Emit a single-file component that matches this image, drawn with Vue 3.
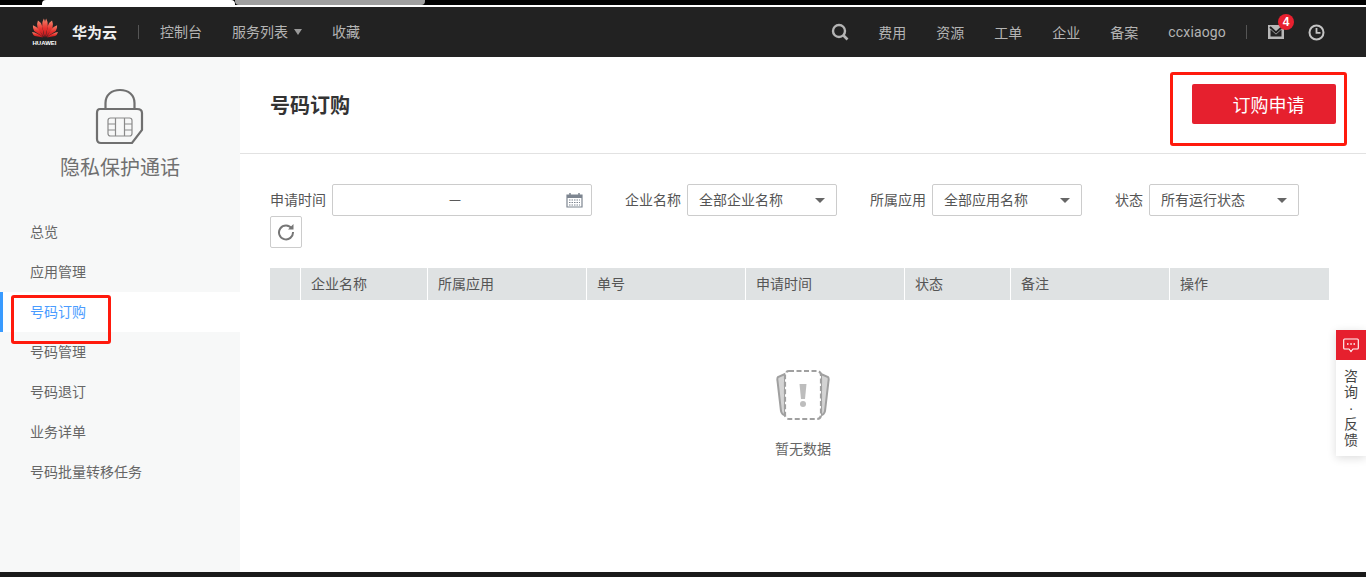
<script setup>
const leftNav = ['控制台', '服务列表', '收藏']
const rightNav = ['费用', '资源', '工单', '企业', '备案']
const sideMenu = ['总览', '应用管理', '号码订购', '号码管理', '号码退订', '业务详单', '号码批量转移任务']
const columns = [
  { label: '', width: 31 },
  { label: '企业名称', width: 127 },
  { label: '所属应用', width: 159 },
  { label: '单号', width: 159 },
  { label: '申请时间', width: 159 },
  { label: '状态', width: 106 },
  { label: '备注', width: 159 },
  { label: '操作', width: 159 }
]
const filters = [
  { label: '企业名称', value: '全部企业名称', cls: 'f1' },
  { label: '所属应用', value: '全部应用名称', cls: 'f2' },
  { label: '状态', value: '所有运行状态', cls: 'f3' }
]
</script>

<template>
  <div class="page">
    <div class="browser-strip">
      <div class="tab-white"></div>
      <div class="tab-grey"></div>
    </div>

    <header class="topbar">
      <div class="logo">
        <svg width="26" height="20" viewBox="0 0 28 23" preserveAspectRatio="none">
          <defs>
            <linearGradient id="petal" x1="0" y1="0" x2="0" y2="1">
              <stop offset="0" stop-color="#f58a70" />
              <stop offset="0.5" stop-color="#e8322e" />
              <stop offset="1" stop-color="#b9141b" />
            </linearGradient>
          </defs>
          <g fill="url(#petal)">
            <path d="M14 22.500 L11 10 Q10.500 4 12.800 0.500 Q15.500 5 14 22.500Z" />
            <path d="M14 22.500 L17 10 Q17.500 4 15.200 0.500 Q12.500 5 14 22.500Z" />
            <path d="M13.200 22 L6 12 Q4.600 7 6.400 3 Q10 5 11 9.500Z" />
            <path d="M14.800 22 L22 12 Q23.400 7 21.600 3 Q18 5 17 9.500Z" />
            <path d="M12.400 22 L2.400 15 Q0.600 12 1 8.400 Q5 10 7.600 13.500Z" />
            <path d="M15.600 22 L25.600 15 Q27.400 12 27 8.400 Q23 10 20.400 13.500Z" />
            <path d="M12 22.500 L3 20.800 Q1 19.500 0 16 Q5.500 16.500 12 22.500Z" />
            <path d="M16 22.500 L25 20.800 Q27 19.500 28 16 Q22.500 16.500 16 22.500Z" />
          </g>
        </svg>
        <span class="logo-text">HUAWEI</span>
      </div>
      <span class="brand">华为云</span>
      <i class="divider"></i>
      <nav class="nav-left">
        <a v-for="item in leftNav" :key="item">
          {{ item }}<em v-if="item === '服务列表'" class="caret"></em>
        </a>
      </nav>
      <div class="nav-right">
        <svg class="search" width="18" height="18" viewBox="0 0 18 18">
          <circle cx="8" cy="8" r="6" fill="none" stroke="#b4b4b4" stroke-width="2.400" />
          <path d="M12.500 12.500 L16.500 16.500" stroke="#b4b4b4" stroke-width="2.600" />
        </svg>
        <a v-for="item in rightNav" :key="item">{{ item }}</a>
        <a class="user">ccxiaogo</a>
        <i class="divider small"></i>
        <span class="mail">
          <svg width="16" height="14" viewBox="0 0 16 14">
            <path d="M0 0 H16 V14 H0Z M2.500 4.500 V11.500 H13.500 V4.500 L8 9.500Z" fill="#b8b8b8" fill-rule="evenodd" />
            <path d="M2 2 L8 7.500 L14 2" fill="none" stroke="#222" stroke-width="2" />
          </svg>
          <b class="badge">4</b>
        </span>
        <svg class="clock" width="17" height="17" viewBox="0 0 17 17">
          <circle cx="8.500" cy="8.500" r="7" fill="none" stroke="#c4c4c4" stroke-width="2" />
          <path d="M8.500 4 V8.800 H12.500" fill="none" stroke="#c4c4c4" stroke-width="1.800" />
        </svg>
      </div>
    </header>

    <div class="body">
      <aside class="sidebar">
        <div class="product">
          <svg width="50" height="58" viewBox="0 0 50 58">
            <path d="M10.500 21 V15 C10.500 7 16.500 2 25 2 C33.500 2 39.500 7 39.500 15 V21" fill="none" stroke="#707070" stroke-width="2.200" />
            <path d="M5 21 H42 Q47 21 47 25 V42 L37 55 H6 Q2 55 2 51 V25 Q2 21 5 21Z" fill="none" stroke="#707070" stroke-width="2.200" />
            <rect x="13" y="30" width="24" height="18" rx="2.500" fill="none" stroke="#8a8a8a" stroke-width="1.200" />
            <path d="M20.500 30 V48 M29.500 30 V48 M13 36 H20.500 M13 42 H20.500 M29.500 36 H37 M29.500 42 H37" stroke="#8a8a8a" stroke-width="1.200" fill="none" />
          </svg>
          <h2>隐私保护通话</h2>
        </div>
        <ul class="menu">
          <li v-for="item in sideMenu" :key="item" :class="{ active: item === '号码订购' }">{{ item }}</li>
        </ul>
      </aside>

      <main class="content">
        <div class="title-row">
          <h1>号码订购</h1>
          <button class="apply">订购申请</button>
        </div>

        <div class="filters">
          <label class="field">
            <span>申请时间</span>
            <div class="box date">
              <span class="dash">—</span>
              <svg width="17" height="16" viewBox="0 0 17 16">
                <path d="M1 3 H16 V15 H1Z" fill="none" stroke="#7d8590" stroke-width="1.200" />
                <path d="M1 3 H16 V6 H1Z" fill="#7d8590" />
                <path d="M4 1 V4 M13 1 V4" stroke="#7d8590" stroke-width="1.500" />
                <path d="M3 8 H14 M3 10.500 H14 M3 13 H14" stroke="#7d8590" stroke-width="1.200" stroke-dasharray="1.500 1" />
              </svg>
            </div>
          </label>
          <label v-for="f in filters" :key="f.label" class="field" :class="f.cls">
            <span>{{ f.label }}</span>
            <div class="box select">
              <span>{{ f.value }}</span>
              <em class="arrow"></em>
            </div>
          </label>
          <button class="refresh">
            <svg width="18" height="18" viewBox="0 0 18 18">
              <path d="M14.800 5.500 A7 7 0 1 0 16 9" fill="none" stroke="#767676" stroke-width="2" />
              <path d="M11 6.500 L16.500 6.500 L16.500 1Z" fill="#767676" />
            </svg>
          </button>
        </div>

        <div class="table-head">
          <div v-for="(col, i) in columns" :key="i" class="th" :style="{ width: col.width + 'px' }">{{ col.label }}</div>
        </div>

        <div class="empty">
          <svg width="54" height="52" viewBox="0 0 54 52">
            <path d="M9 5 L2 8 Q1 9 1.500 12 L5 42 Q6 46 9 46Z" fill="#d4d4d4" stroke="#a0a0a0" stroke-width="2" />
            <path d="M45 5 L52 8 Q53 9 52.500 12 L49 42 Q48 46 45 46Z" fill="#d4d4d4" stroke="#a0a0a0" stroke-width="2" />
            <rect x="9" y="2" width="36" height="48" rx="4" fill="#fff" stroke="#a0a0a0" stroke-width="2.200" stroke-dasharray="5 2.500" />
            <path d="M23.500 15 H30.500 L29 30 H25Z" fill="#bdbdbd" />
            <circle cx="27" cy="35" r="3" fill="#bdbdbd" />
          </svg>
          <p>暂无数据</p>
        </div>
      </main>
    </div>

    <div class="bottom-strip"></div>

    <!-- 截图上的红色标注框 -->
    <div class="mark mark-menu"></div>
    <div class="mark mark-btn"></div>

    <div class="feedback">
      <div class="fb-icon">
        <svg width="16" height="15" viewBox="0 0 16 15">
          <path d="M1.500 1 H14.500 Q15.300 1 15.300 2 V10 Q15.300 11 14.500 11 H10 L8 13.500 L6 11 H1.500 Q0.700 11 0.700 10 V2 Q0.700 1 1.500 1Z" fill="none" stroke="#fff" stroke-width="1.100" />
          <path d="M4 6 H5.500 M7.300 6 H8.800 M10.500 6 H12" stroke="#fff" stroke-width="1.500" />
        </svg>
      </div>
      <div class="fb-text">咨询·反馈</div>
    </div>
  </div>
</template>

<style>
html, body {
  margin: 0;
  background: #fff;
  overflow: hidden;
}
</style>

<style scoped>
* {
  box-sizing: border-box;
}
.page {
  position: relative;
  width: 1366px;
  height: 577px;
  overflow: hidden;
  display: flex;
  flex-direction: column;
  font-family: "Liberation Sans", "Noto Sans CJK SC", sans-serif;
  font-size: 14px;
  color: #666;
}
.browser-strip {
  height: 7px;
  background: #000;
  border-bottom: 2px solid #fff;
  display: flex;
  padding-left: 42px;
  flex: none;
}
.tab-white {
  width: 193px;
  background: #fff;
  border-radius: 4px 4px 0 0;
}
.tab-grey {
  width: 190px;
  background: #a0a0a0;
  border-radius: 0 0 4px 4px;
}
.topbar {
  height: 50px;
  flex: none;
  background: #222;
  display: flex;
  align-items: center;
  padding-left: 31px;
  color: #b4b4b4;
}
.logo {
  width: 27px;
  display: flex;
  flex-direction: column;
  align-items: center;
}
.logo-text {
  font-size: 6px;
  font-weight: 700;
  line-height: 6px;
  color: #fff;
  margin-top: 2px;
  white-space: nowrap;
}
.brand {
  color: #f0f0f0;
  font-size: 15px;
  font-weight: 700;
  margin-left: 14px;
  padding-bottom: 2px;
}
.divider {
  width: 1px;
  height: 14px;
  background: #555;
  margin: 0 21px 0 21px;
}
.divider.small {
  margin: 0 21px 0 20px;
}
.nav-left {
  display: flex;
  gap: 30px;
  padding-bottom: 2px;
}
.nav-left a,
.nav-right a {
  color: #b4b4b4;
  font-size: 14px;
}
.caret {
  display: inline-block;
  margin-left: 6px;
  border: 4px solid transparent;
  border-top: 6px solid #9a9a9a;
  border-bottom: 0;
  vertical-align: 2px;
}
.nav-right {
  margin-left: auto;
  display: flex;
  align-items: center;
  padding-right: 41px;
}
.nav-right a {
  margin-left: 30px;
}
.search {
  margin-right: -1px;
}
.nav-right .user {
  font-family: Roboto, "Liberation Sans", sans-serif;
  font-size: 14px;
  letter-spacing: 0.15px;
}
.mail {
  position: relative;
  display: flex;
  margin-right: 24px;
}
.badge {
  position: absolute;
  top: -11px;
  left: 10px;
  width: 16px;
  height: 16px;
  border-radius: 50%;
  background: #e8202f;
  color: #fff;
  font-size: 12px;
  line-height: 16px;
  text-align: center;
}
.body {
  flex: 1;
  display: flex;
  min-height: 0;
}
.sidebar {
  width: 240px;
  flex: none;
  background: #f7f8f8;
  padding-top: 31px;
}
.product {
  display: flex;
  flex-direction: column;
  align-items: center;
}
.product h2 {
  margin: 8px 0 0;
  font-size: 20px;
  line-height: 28px;
  font-weight: 400;
  color: #707070;
}
.menu {
  list-style: none;
  margin: 30px 0 0;
  padding: 0;
}
.menu li {
  height: 40px;
  line-height: 40px;
  padding-left: 30px;
  color: #666;
}
.menu li.active {
  background: #fff;
  color: #4a9cff;
  border-left: 3px solid #3a9bff;
  padding-left: 27px;
}
.content {
  flex: 1;
  min-width: 0;
}
.title-row {
  height: 97px;
  border-bottom: 1px solid #e2e2e2;
  display: flex;
  align-items: center;
  justify-content: space-between;
  padding: 0 30px;
}
.title-row h1 {
  margin: 0 0 2px;
  font-size: 20px;
  font-weight: 700;
  color: #333;
}
.apply {
  width: 144px;
  height: 40px;
  margin-top: -3px;
  padding: 0 0 0 9px;
  background: #e6202e;
  color: #fff;
  border: 0;
  border-radius: 2px;
  font: inherit;
  font-size: 18px;
}
.filters {
  display: flex;
  flex-wrap: wrap;
  align-items: center;
  padding: 30px 0 0 30px;
  width: 1060px;
}
.field {
  display: flex;
  align-items: center;
  gap: 6px;
  height: 32px;
  color: #555;
  font-size: 14px;
}
.field > span {
  padding-bottom: 2px;
}
.f1,
.f2,
.f3 {
  margin-left: 33px;
}
.box {
  height: 32px;
  border: 1px solid #ccc;
  border-radius: 2px;
  display: flex;
  align-items: center;
  background: #fff;
  font-size: 14px;
  color: #555;
}
.box > span {
  padding-bottom: 2px;
}
.date {
  width: 260px;
  justify-content: center;
  position: relative;
}
.date svg {
  position: absolute;
  right: 8px;
  top: 7px;
}
.dash {
  font-size: 11px;
  color: #333;
  margin-right: 14px;
}
.select {
  width: 150px;
  padding: 0 11px;
  justify-content: space-between;
}
.arrow {
  border: 5px solid transparent;
  border-top: 5px solid #666;
  border-bottom: 0;
}
.refresh {
  width: 32px;
  height: 32px;
  padding: 0;
  background: #fff;
  border: 1px solid #ccc;
  border-radius: 2px;
  display: flex;
  align-items: center;
  justify-content: center;
}
.table-head {
  display: flex;
  margin: 20px 0 0 30px;
  height: 32px;
  background: #dfe2e3;
  width: 1059px;
}
.th {
  height: 32px;
  line-height: 32px;
  padding-left: 10px;
  border-right: 1px solid #fff;
  color: #555;
  font-size: 14px;
  flex: none;
}
.th:last-child {
  border-right: 0;
}
.empty {
  display: flex;
  flex-direction: column;
  align-items: center;
  margin-top: 69px;
  width: 1126px;
}
.empty p {
  margin: 17px 0 0;
  font-size: 14px;
  color: #666;
}
.bottom-strip {
  height: 5px;
  background: #1a1a1a;
  flex: none;
}
.mark {
  position: absolute;
  border: 3px solid #ff1a0d;
  border-radius: 3px;
}
.mark-menu {
  left: 11px;
  top: 295px;
  width: 100px;
  height: 49px;
}
.mark-btn {
  left: 1170px;
  top: 72px;
  width: 177px;
  height: 74px;
}
.feedback {
  position: absolute;
  left: 1336px;
  top: 330px;
  width: 30px;
  height: 126px;
  background: #fff;
  box-shadow: 0 2px 10px rgba(0, 0, 0, 0.14);
}
.fb-icon {
  height: 30px;
  background: #e6202e;
  display: flex;
  align-items: center;
  justify-content: center;
}
.fb-text {
  padding-top: 8px;
  width: 14px;
  margin: 0 auto;
  font-size: 14px;
  line-height: 16px;
  color: #444;
  text-align: center;
  word-break: break-all;
}
</style>
